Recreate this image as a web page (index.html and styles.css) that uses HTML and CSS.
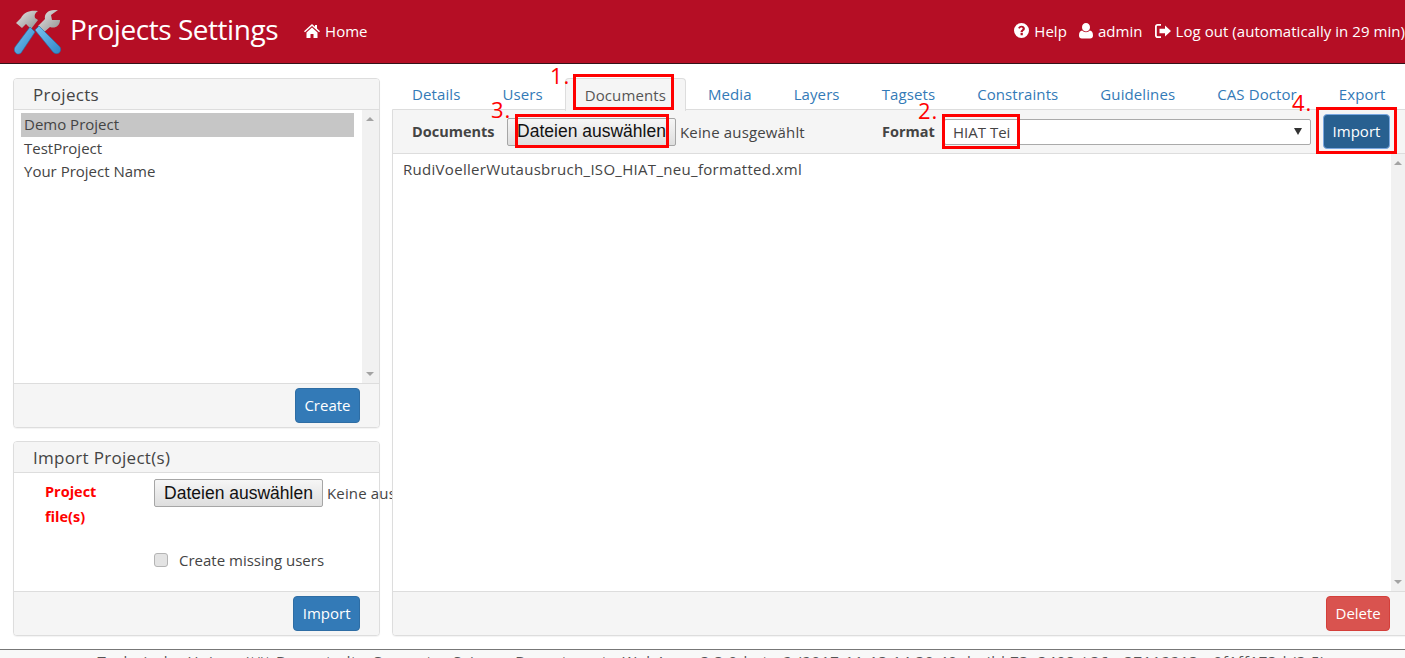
FILE: index.html
```html
<!DOCTYPE html>
<html lang="en">
<head>
    <meta charset="UTF-8">
    <meta name="viewport" content="width=device-width, initial-scale=1.0">
    <title>Projects Settings</title>
    <link rel="stylesheet" href="styles.css">
</head>
<body>
    <header class="navbar">
        <svg class="logo" viewBox="0 0 48 46" width="48" height="46">
            <defs>
                <linearGradient id="steel" x1="0" y1="0" x2="1" y2="1">
                    <stop offset="0" stop-color="#e6e6e6"/>
                    <stop offset="1" stop-color="#8f8f8f"/>
                </linearGradient>
                <linearGradient id="grip" x1="0" y1="0" x2="1" y2="1">
                    <stop offset="0" stop-color="#7cc4f0"/>
                    <stop offset="1" stop-color="#2f86c8"/>
                </linearGradient>
            </defs>
            <!-- wrench -->
            <path d="M24 17 L31 10 C30 5 34 1 40 1 L44 1 L37 6 L38 11 L46 11 C46 17 41 20 36 18 L29 24 Z" fill="url(#steel)"/>
            <path d="M21 21 L25 17 L46 38 C47 40 47 42 45 44 C43 45 41 45 39 43 Z" fill="url(#grip)" stroke="#1f6ea8" stroke-width=".6"/>
            <!-- hammer -->
            <path d="M2 14 L7 9 C10 3 16 1 24 2 C21 4 20 6 21 9 L24 11 L17 20 L12 15 L8 19 Z" fill="url(#steel)"/>
            <path d="M16 18 L21 23 L7 44 C5 46 2 45 1 43 C0 42 0 40 1 38 Z" fill="url(#grip)" stroke="#1f6ea8" stroke-width=".6"/>
        </svg>
        <span class="brand">Projects Settings</span>
        <a class="nav-link home-link">
            <svg class="nav-icon" viewBox="0 0 16 14" width="16" height="14"><path d="M8 0 L11 2.7 V1 H13 V4.5 L16 7.3 L15 8.3 L8 2 L1 8.3 L0 7.3 Z M2.5 8.5 L8 3.6 L13.5 8.5 V14 H9.5 V10 H6.5 V14 H2.5 Z" fill="#fff"/></svg>
            Home
        </a>
        <div class="nav-right">
            <a class="nav-link">
                <svg class="nav-icon" viewBox="0 0 16 16" width="15" height="15"><path fill-rule="evenodd" d="M8 0 A8 8 0 1 1 8 16 A8 8 0 1 1 8 0 Z M7 10.5 V13 H9.4 V10.5 Z M8 2.8 C6 2.8 4.8 3.8 4.4 5.4 L6.2 6 C6.5 5.2 7 4.8 7.8 4.8 C8.6 4.8 9.2 5.2 9.2 5.9 C9.2 6.6 8.6 7 8 7.5 C7.2 8.1 7 8.7 7 9.7 H9.4 C9.4 9 9.7 8.8 10.3 8.3 C11 7.7 11.6 7 11.6 5.8 C11.6 4 10 2.8 8 2.8 Z" fill="#fff"/></svg>
                Help
            </a>
            <a class="nav-link">
                <svg class="nav-icon" viewBox="0 0 14 16" width="14" height="16"><path d="M7 0 C9.4 0 11 1.9 11 4.2 C11 6.5 9.4 8.4 7 8.4 C4.6 8.4 3 6.5 3 4.2 C3 1.9 4.6 0 7 0 Z M3.2 7.6 C4.2 8.7 5.5 9.3 7 9.3 C8.5 9.3 9.8 8.7 10.8 7.6 C13 7.9 14 9.8 14 12.6 C14 14.6 12.9 15.6 11.2 15.6 H2.8 C1.1 15.6 0 14.6 0 12.6 C0 9.8 1 7.9 3.2 7.6 Z" fill="#fff"/></svg>
                admin
            </a>
            <a class="nav-link">
                <svg class="nav-icon" viewBox="0 0 16 14" width="16" height="14"><path d="M6 0 V1.8 H2.6 C2.1 1.8 1.8 2.1 1.8 2.6 V11.4 C1.8 11.9 2.1 12.2 2.6 12.2 H6 V14 H2.6 C1.1 14 0 12.9 0 11.4 V2.6 C0 1.1 1.1 0 2.6 0 Z M10 1.5 L16 7 L10 12.5 V9.3 H4.5 V4.7 H10 Z" fill="#fff"/></svg>
                Log out (automatically in 29 min)
            </a>
        </div>
    </header>

    <div class="content">
        <div class="sidebar">
            <section class="panel projects-panel">
                <h2 class="panel-title">Projects</h2>
                <div class="list-box">
                    <ul class="project-list">
                        <li class="selected">Demo Project</li>
                        <li>TestProject</li>
                        <li>Your Project Name</li>
                    </ul>
                    <div class="scrollbar"><span class="arrow-up"></span><span class="arrow-down"></span></div>
                </div>
                <div class="panel-footer"><button class="btn btn-primary">Create</button></div>
            </section>

            <section class="panel import-panel">
                <h2 class="panel-title">Import Project(s)</h2>
                <div class="import-body">
                    <label class="required-label">Project file(s)</label>
                    <div class="import-fields">
                        <div class="file-row">
                            <button class="file-btn">Dateien auswählen</button>
                            <span class="file-status">Keine ausgewählt</span>
                        </div>
                        <label class="check-row"><span class="checkbox"></span>Create missing users</label>
                    </div>
                </div>
                <div class="panel-footer"><button class="btn btn-primary">Import</button></div>
            </section>
        </div>

        <div class="main">
            <ul class="tabs">
                <li>Details</li>
                <li>Users</li>
                <li class="active">Documents</li>
                <li>Media</li>
                <li>Layers</li>
                <li>Tagsets</li>
                <li>Constraints</li>
                <li>Guidelines</li>
                <li>CAS Doctor</li>
                <li>Export</li>
            </ul>
            <section class="panel doc-panel">
                <div class="toolbar">
                    <strong class="toolbar-title">Documents</strong>
                    <button class="file-btn">Dateien auswählen</button>
                    <span class="file-status">Keine ausgewählt</span>
                    <strong class="format-label">Format</strong>
                    <div class="select-box">HIAT Tei<span class="select-arrow"></span></div>
                    <button class="btn btn-primary btn-pressed">Import</button>
                </div>
                <div class="doc-body">
                    <div class="doc-list">RudiVoellerWutausbruch_ISO_HIAT_neu_formatted.xml</div>
                    <div class="scrollbar"><span class="arrow-up"></span><span class="arrow-down"></span></div>
                </div>
                <div class="panel-footer"><button class="btn btn-danger">Delete</button></div>
            </section>
        </div>
    </div>

    <footer class="footer">Technische Universität Darmstadt - Computer Science Department - WebAnno 3.3.0-beta-2 (2017-11-13 14:30:40, build 73e3408 / 36 - 37112213 - 0f1ff173d (3.5)</footer>

    <!-- annotations drawn over the screenshot -->
    <div class="mark mark-tab"></div>
    <div class="mark mark-file"></div>
    <div class="mark mark-format"></div>
    <div class="mark mark-import"></div>
    <span class="step step-1">1.</span>
    <span class="step step-2">2.</span>
    <span class="step step-3">3.</span>
    <span class="step step-4">4.</span>
</body>
</html>
```

FILE: styles.css
```css
* {
    box-sizing: border-box;
}

html, body {
    height: 658px;
}

body {
    margin: 0;
    position: relative;
    overflow: hidden;
    font-family: "Open Sans", Arial, sans-serif;
    font-size: 15px;
    color: #444;
    background: white;
}

/* Top bar */
.navbar {
    display: flex;
    align-items: center;
    width: 1405px;
    height: 64px;
    padding-left: 14px;
    background-color: #b50e25;
    border-bottom: 1px solid #33141a;
    color: white;
    white-space: nowrap;
}

.logo {
    flex: none;
    margin-right: 8px;
}

.brand {
    font-size: 28px;
    margin: 0 26px 5px 0;
    letter-spacing: -0.45px;
}

.nav-link {
    display: flex;
    align-items: center;
    gap: 5px;
    margin-bottom: 2px;
}

.nav-right {
    display: flex;
    gap: 12px;
    margin-left: auto;
    letter-spacing: .05px;
}

/* Page columns */
.content {
    display: flex;
    gap: 12px;
    padding: 14px 0 0 13px;
    width: 1420px;
}

.sidebar {
    flex: none;
    width: 367px;
}

.main {
    flex: none;
    width: 1028px;
}

/* Panels */
.panel {
    display: flex;
    flex-direction: column;
    border: 1px solid #ddd;
    border-radius: 4px;
    background: white;
    box-shadow: 0 1px 1px rgba(0, 0, 0, .05);
}

.projects-panel {
    height: 350px;
    margin-bottom: 13px;
}

.import-panel {
    height: 195px;
}

.panel-title {
    margin: 0;
    height: 31px;
    padding: 4px 19px 0;
    font-size: 17px;
    font-weight: normal;
    line-height: 24px;
    letter-spacing: .3px;
    background: #f5f5f5;
    border-bottom: 1px solid #ddd;
    border-radius: 3px 3px 0 0;
}

.panel-footer {
    display: flex;
    justify-content: flex-end;
    align-items: center;
    height: 44px;
    padding-right: 19px;
    background: #f5f5f5;
    border-top: 1px solid #ddd;
    border-radius: 0 0 3px 3px;
}

/* Project list */
.list-box {
    flex: 1;
    display: flex;
    min-height: 0;
}

.project-list {
    flex: 1;
    list-style: none;
    margin: 0;
    padding: 3px 8px 3px 7px;
    line-height: 23.5px;
}

.project-list li {
    padding-left: 3px;
}

.project-list .selected {
    background: #c6c6c6;
}

.scrollbar {
    position: relative;
    flex: none;
    width: 17px;
    background: #f1f1f1;
}

.arrow-up, .arrow-down {
    position: absolute;
    left: 4px;
    width: 0;
    height: 0;
    border-left: 4px solid transparent;
    border-right: 4px solid transparent;
}

.arrow-up {
    top: 7px;
    border-bottom: 4px solid #a3a3a3;
}

.arrow-down {
    bottom: 7px;
    border-top: 4px solid #a3a3a3;
}

/* Import form */
.import-body {
    flex: 1;
    display: flex;
    min-height: 0;
}

.required-label {
    flex: none;
    width: 140px;
    padding: 6px 40px 0 31px;
    font-weight: bold;
    font-size: 14.5px;
    line-height: 25px;
    color: #f00;
}

.import-fields {
    flex: none;
}

.file-row {
    display: flex;
    align-items: center;
    gap: 4px;
    width: 238px;
    margin-top: 6px;
    overflow: hidden;
    white-space: nowrap;
}

.file-status {
    letter-spacing: .15px;
}

.file-btn {
    flex: none;
    width: 169px;
    height: 28px;
    padding: 0;
    font-family: "Liberation Sans", Arial, sans-serif;
    font-size: 17.5px;
    color: #111;
    background: linear-gradient(#f6f6f6, #dedede);
    border: 1px solid #a6a6a6;
    border-radius: 2px;
}

.check-row {
    display: flex;
    align-items: center;
    gap: 11px;
    margin-top: 43px;
}

.checkbox {
    width: 14px;
    height: 14px;
    background: #e3e3e3;
    border: 1px solid #b4b4b4;
    border-radius: 3px;
}

/* Buttons */
.btn {
    height: 35px;
    padding: 0 8.5px 2px;
    font-family: inherit;
    font-size: 15px;
    color: white;
    border: 1px solid transparent;
    border-radius: 4px;
}

.btn-primary {
    background: #337ab7;
    border-color: #2e6da4;
}

.btn-danger {
    background: #d9534f;
    border-color: #d43f3a;
}

.btn-pressed {
    background: #286090;
    border-color: #7aa7e0;
    margin-left: 12px;
    flex: none;
    width: 67px;
    padding: 0 0 2px;
}

/* Tabs */
.tabs {
    display: flex;
    list-style: none;
    margin: 0;
    padding: 0;
    height: 32px;
    color: #337ab7;
    letter-spacing: .1px;
}

.tabs li {
    padding: 4px 20px 0;
    margin-right: 2px;
    line-height: 24px;
}

.tabs .active {
    color: #555;
    background: #f5f5f5;
    border: 1px solid #ddd;
    border-bottom: 0;
    border-radius: 4px 4px 0 0;
    padding: 4px 19px;
    position: relative;
    margin-bottom: -1px;
}

/* Documents panel */
.doc-panel {
    height: 527px;
    margin-top: -1px;
    border-radius: 0 0 4px 4px;
}

.toolbar {
    display: flex;
    align-items: center;
    height: 44px;
    padding-left: 19px;
    background: #f5f5f5;
    border-bottom: 1px solid #ddd;
    white-space: nowrap;
}

.toolbar-title {
    flex: none;
    width: 95px;
    font-size: 14.5px;
}

.toolbar .file-status {
    flex: none;
    margin-left: 4px;
    width: 202px;
}

.format-label {
    flex: none;
    width: 62px;
    font-size: 14.5px;
}

.select-box {
    position: relative;
    flex: none;
    width: 367px;
    height: 26px;
    padding-left: 8px;
    line-height: 25px;
    background: white;
    border: 1px solid #aaa;
    border-radius: 2px;
}

.select-arrow {
    position: absolute;
    top: 8px;
    right: 8px;
    width: 0;
    height: 0;
    border-left: 4px solid transparent;
    border-right: 4px solid transparent;
    border-top: 7px solid #333;
}

.doc-body {
    flex: 1;
    display: flex;
    min-height: 0;
    width: 1012px;
}

.doc-list {
    flex: 1;
    padding: 5px 10px;
    line-height: 20px;
    letter-spacing: .3px;
}

.doc-body .scrollbar {
    width: 14px;
}

.doc-body .arrow-up, .doc-body .arrow-down {
    left: 3px;
}

.doc-panel .panel-footer {
    justify-content: flex-start;
    padding-left: 933px;
}

/* Footer, mostly below the fold */
.footer {
    position: absolute;
    top: 649px;
    left: 0;
    width: 100%;
    height: 20px;
    padding: 1px 0 0 18px;
    text-align: center;
    font-size: 15px;
    letter-spacing: .73px;
    white-space: nowrap;
    color: #555;
    background: #f8f8f8;
    border-top: 1px solid #777;
}

/* Red marks over the page */
.mark {
    position: absolute;
    border: 3px solid #f00;
}

.mark-tab {
    left: 573px;
    top: 74px;
    width: 101px;
    height: 36px;
}

.mark-file {
    left: 515px;
    top: 114px;
    width: 154px;
    height: 34px;
}

.mark-format {
    left: 942px;
    top: 114px;
    width: 78px;
    height: 35px;
}

.mark-import {
    left: 1316px;
    top: 107px;
    width: 81px;
    height: 47px;
}

.step {
    position: absolute;
    font-size: 22px;
    line-height: 24px;
    letter-spacing: 1px;
    color: #f00;
}

.step-1 {
    left: 550px;
    top: 63px;
}

.step-2 {
    left: 918px;
    top: 98px;
}

.step-3 {
    left: 491px;
    top: 97px;
}

.step-4 {
    left: 1292px;
    top: 90px;
}
```
